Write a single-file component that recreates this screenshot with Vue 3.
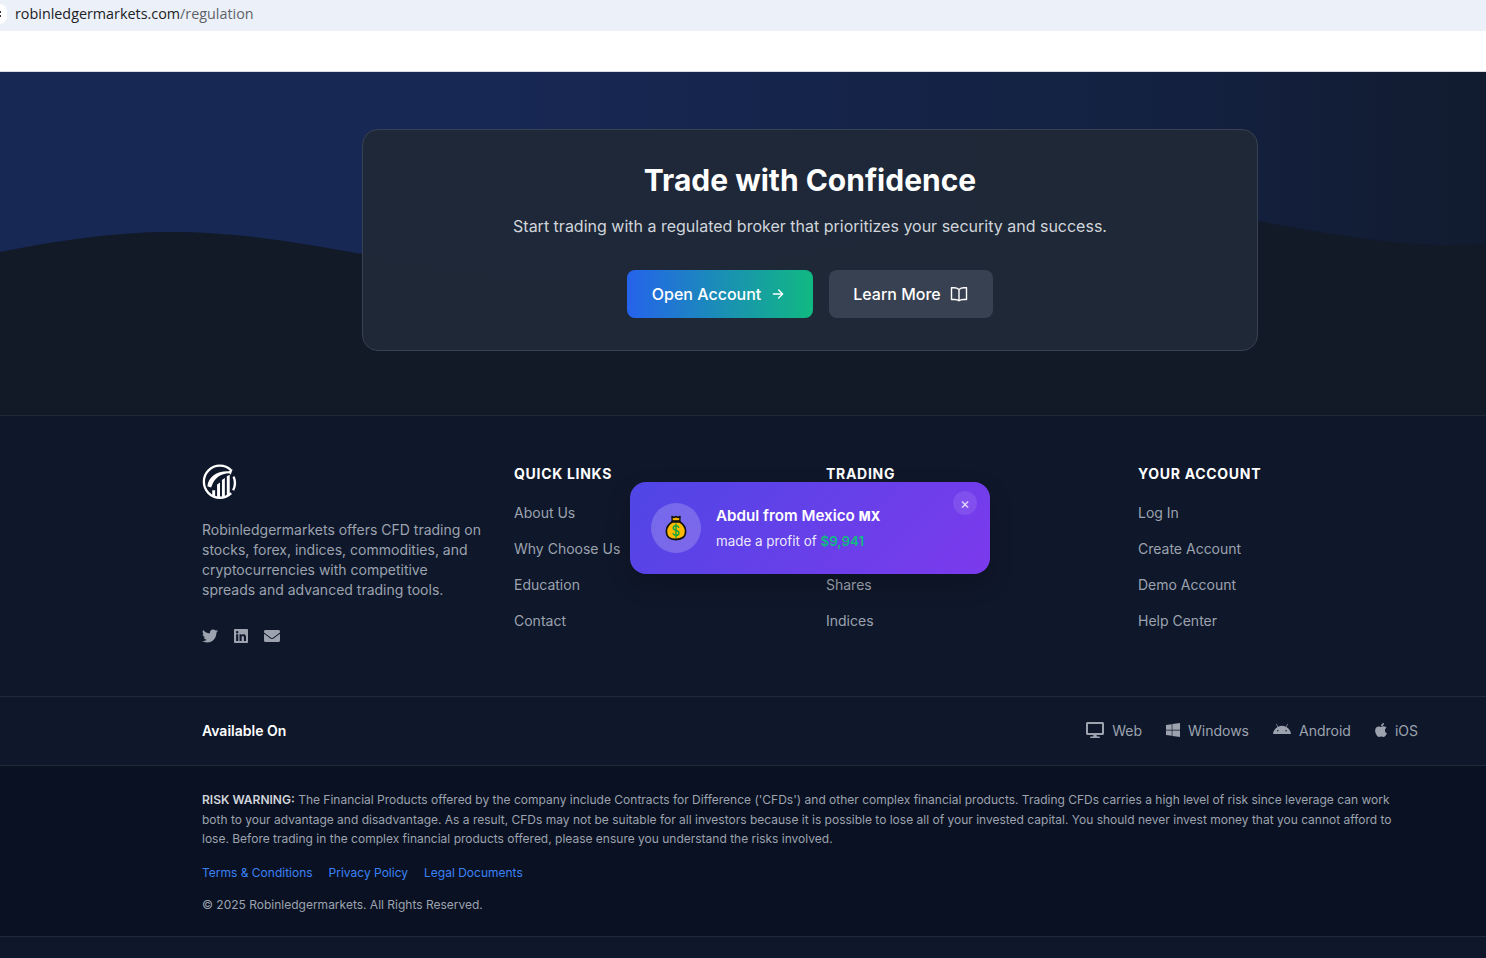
<script setup>
const quick = ['About Us', 'Why Choose Us', 'Education', 'Contact']
const trading = ['Forex', 'Commodities', 'Shares', 'Indices']
const account = ['Log In', 'Create Account', 'Demo Account', 'Help Center']
const columns = [
  { title: 'Quick Links', links: quick },
  { title: 'Trading', links: trading },
  { title: 'Your Account', links: account },
]
const platforms = [
  { name: 'Web', box: '0 0 576 512', w: 18, d: 'M528 0H48C21.5 0 0 21.5 0 48v320c0 26.5 21.5 48 48 48h192l-16 48h-72c-13.3 0-24 10.7-24 24s10.7 24 24 24h272c13.3 0 24-10.7 24-24s-10.7-24-24-24h-72l-16-48h192c26.5 0 48-21.5 48-48V48c0-26.5-21.5-48-48-48zm-16 352H64V64h448v288z' },
  { name: 'Windows', box: '0 0 448 512', w: 14, d: 'M0 93.7l183.6-25.3v177.4H0V93.7zm0 324.6l183.6 25.3V268.4H0v149.9zm203.8 28L448 480V268.4H203.8v177.9zm0-380.6v180.1H448V32L203.8 65.7z' },
  { name: 'Android', box: '0 0 576 512', w: 18, d: 'M420.55,301.93a24,24,0,1,1,24-24,24,24,0,0,1-24,24m-265.1,0a24,24,0,1,1,24-24,24,24,0,0,1-24,24m273.7-144.48,47.94-83a10,10,0,1,0-17.27-10h0l-48.54,84.07a301.25,301.25,0,0,0-246.56,0L116.18,64.45a10,10,0,1,0-17.27,10h0l47.94,83C64.53,202.22,8.24,285.55,0,384H576c-8.24-98.45-64.54-181.78-146.85-226.55' },
  { name: 'iOS', box: '0 0 384 512', w: 12, d: 'M318.7 268.7c-.2-36.7 16.4-64.4 50-84.8-18.8-26.9-47.2-41.7-84.7-44.6-35.5-2.8-74.3 20.7-88.5 20.7-15 0-49.4-19.7-76.4-19.7C63.3 141.2 4 184.8 4 273.5q0 39.3 14.4 81.2c12.8 36.7 59 126.7 107.2 125.2 25.2-.6 43-17.9 75.8-17.9 31.8 0 48.3 17.9 76.4 17.9 48.6-.7 90.4-82.5 102.6-119.3-65.2-30.7-61.7-90-61.7-91.9zm-56.6-164.2c27.3-32.4 24.8-61.9 24-72.5-24.1 1.4-52 16.4-67.9 34.9-17.5 19.8-27.8 44.3-25.6 71.9 26.1 2 49.9-11.4 69.5-34.3z' },
]
</script>

<template>
  <div class="page">
    <div class="urlbar">
      <span class="site-chip"></span>
      <span class="url"><span class="domain">robinledgermarkets.com</span>/regulation</span>
    </div>
    <div class="nav"></div>

    <section class="hero">
      <svg class="wave" viewBox="0 0 1486 343" preserveAspectRatio="none" aria-hidden="true">
        <path d="M0 180 C60 168 115 160 170 160 C240 160 300 171 362 182 C480 204 610 222 760 190 C900 160 1090 120 1258 149 C1330 162 1390 173 1450 173 C1462 173 1475 172 1486 172 L1486 343 L0 343 Z" />
      </svg>
      <div class="cta">
        <h1>Trade with Confidence</h1>
        <p>Start trading with a regulated broker that prioritizes your security and success.</p>
        <div class="cta-buttons">
          <a class="btn btn-primary">
            Open Account
            <svg width="16" height="16" viewBox="0 0 24 24" fill="none" stroke="currentColor" stroke-width="2" stroke-linecap="round" stroke-linejoin="round"><path d="M5 12h14M13 6l6 6-6 6" /></svg>
          </a>
          <a class="btn btn-secondary">
            Learn More
            <svg width="20" height="20" viewBox="0 0 24 24" fill="none" stroke="currentColor" stroke-width="1.7" stroke-linecap="round" stroke-linejoin="round"><path d="M12 6.5C10.5 5.2 8.5 4.5 6 4.5H3v14h4c2 0 3.7.5 5 1.6 1.3-1.100 3-1.600 5-1.600h4v-14h-3c-2.500 0-4.500.7-6 2zM12 6.500v13.600" /></svg>
          </a>
        </div>
      </div>
    </section>

    <footer class="footer">
      <div class="inner grid">
        <div class="about">
          <svg class="logo" width="36" height="35" viewBox="0 0 36 36" fill="none" aria-label="Robinledgermarkets">
            <path d="M29.500 6.500A16.500 16.500 0 1 0 29.500 30" stroke="#fff" stroke-width="2.400" />
            <path d="M32 13A16.500 16.500 0 0 1 31.500 27" stroke="#fff" stroke-width="2.400" />
            <path d="M5 23C6 13 15 7 27 7.500L31 5.500l-2 5.500-1.500-1.500C19 10 12 14 9 24c-1.500 0-3-.5-4-1z" fill="#fff" />
            <path d="M10 33v-6h3v7zM15 34V21l3-2v15zM20 34V16.500l3-2V34zM25 33V12.500l3-1.500v20z" fill="#fff" />
          </svg>
          <p>Robinledgermarkets offers CFD trading on stocks, forex, indices, commodities, and cryptocurrencies with competitive spreads and advanced trading tools.</p>
          <div class="social">
            <svg width="16" height="16" viewBox="0 0 512 512"><path fill="currentColor" d="M459.37 151.716c.325 4.548.325 9.097.325 13.645 0 138.72-105.583 298.558-298.558 298.558-59.452 0-114.68-17.219-161.137-47.106 8.447.974 16.568 1.299 25.34 1.299 49.055 0 94.213-16.568 130.274-44.832-46.132-.975-84.792-31.188-98.112-72.772 6.498.974 12.995 1.624 19.818 1.624 9.421 0 18.843-1.3 27.614-3.573-48.081-9.747-84.143-51.98-84.143-102.985v-1.299c13.969 7.797 30.214 12.67 47.431 13.319-28.264-18.843-46.781-51.005-46.781-87.391 0-19.492 5.197-37.36 14.294-52.954 51.655 63.675 129.3 105.258 216.365 109.807-1.624-7.797-2.599-15.918-2.599-24.04 0-57.828 46.782-104.934 104.934-104.934 30.213 0 57.502 12.67 76.67 33.137 23.715-4.548 46.456-13.32 66.599-25.34-7.798 24.366-24.366 44.833-46.132 57.827 21.117-2.273 41.584-8.122 60.426-16.243-14.292 20.791-32.161 39.308-52.628 54.253z" /></svg>
            <svg width="14" height="16" viewBox="0 0 448 512"><path fill="currentColor" d="M416 32H31.900C14.300 32 0 46.500 0 64.300v383.400C0 465.500 14.300 480 31.900 480H416c17.600 0 32-14.500 32-32.300V64.300c0-17.800-14.400-32.300-32-32.300zM135.400 416H69V202.200h66.500V416zm-33.200-243c-21.300 0-38.500-17.300-38.500-38.500S80.900 96 102.200 96c21.200 0 38.500 17.300 38.500 38.500 0 21.300-17.200 38.500-38.500 38.500zm282.100 243h-66.400V312c0-24.800-.5-56.700-34.500-56.700-34.600 0-39.900 27-39.900 54.900V416h-66.400V202.200h63.700v29.200h.9c8.900-16.800 30.600-34.500 62.900-34.500 67.200 0 79.700 44.300 79.700 101.900V416z" /></svg>
            <svg width="16" height="16" viewBox="0 0 512 512"><path fill="currentColor" d="M502.300 190.800c3.900-3.100 9.700-.2 9.700 4.700V400c0 26.500-21.500 48-48 48H48c-26.500 0-48-21.500-48-48V195.600c0-5 5.700-7.800 9.700-4.700 22.400 17.400 52.100 39.500 154.100 113.600 21.100 15.400 56.700 47.800 92.200 47.600 35.700.3 72-32.800 92.300-47.600 102-74.100 131.600-96.300 154-113.700zM256 320c23.200.4 56.600-29.200 73.400-41.400 132.700-96.300 142.800-104.700 173.400-128.700 5.800-4.500 9.200-11.500 9.200-18.900v-19c0-26.500-21.500-48-48-48H48C21.500 64 0 85.500 0 112v19c0 7.400 3.400 14.300 9.200 18.900 30.600 23.900 40.700 32.400 173.400 128.700 16.800 12.200 50.200 41.800 73.400 41.400z" /></svg>
          </div>
        </div>
        <div v-for="col in columns" :key="col.title" class="col">
          <h3>{{ col.title }}</h3>
          <ul>
            <li v-for="l in col.links" :key="l">{{ l }}</li>
          </ul>
        </div>
      </div>

      <div class="platform-bar">
        <div class="inner platform-row">
          <strong>Available On</strong>
          <div class="platforms">
            <span v-for="p in platforms" :key="p.name" class="platform">
              <svg :width="p.w" height="16" :viewBox="p.box"><path fill="currentColor" :d="p.d" /></svg>
              {{ p.name }}
            </span>
          </div>
        </div>
      </div>

      <div class="legal">
        <div class="inner">
          <p class="risk"><b>RISK WARNING:</b> The Financial Products offered by the company include Contracts for Difference ('CFDs') and other complex financial products. Trading CFDs carries a high level of risk since leverage can work both to your advantage and disadvantage. As a result, CFDs may not be suitable for all investors because it is possible to lose all of your invested capital. You should never invest money that you cannot afford to lose. Before trading in the complex financial products offered, please ensure you understand the risks involved.</p>
          <div class="legal-links">
            <a>Terms &amp; Conditions</a>
            <a>Privacy Policy</a>
            <a>Legal Documents</a>
          </div>
          <p class="copy">© 2025 Robinledgermarkets. All Rights Reserved.</p>
        </div>
      </div>
    </footer>

    <div class="toast">
      <div class="toast-icon">
        <svg width="22" height="26" viewBox="0 0 24 26" preserveAspectRatio="none">
          <path d="M7.500 1.500 10 2.500 12 1.500 14 2.500 16.500 1.500 16 6.500H8z" fill="#f7b500" stroke="#111" stroke-width="1.500" stroke-linejoin="round" />
          <path d="M8.500 6.500C4 9 1.500 12.500 1.500 16.500 1.500 22 6 24.500 12 24.500S22.500 22 22.500 16.500C22.500 12.500 20 9 15.500 6.500z" fill="#ffb900" stroke="#111" stroke-width="1.800" />
          <path d="M7.800 6.500h8.400" stroke="#111" stroke-width="1.800" stroke-linecap="round" />
          <path d="M15 12.300c-.6-1-1.700-1.500-3-1.500-1.800 0-3 .9-3 2.300 0 3.200 6.200 1.700 6.200 4.800 0 1.500-1.400 2.400-3.200 2.400-1.400 0-2.600-.6-3.200-1.600M12 9v13.500" fill="none" stroke="#10a53c" stroke-width="1.500" stroke-linecap="round" />
        </svg>
      </div>
      <div class="toast-text">
        <div class="toast-name">Abdul from Mexico <span class="flag">MX</span></div>
        <div class="toast-sub">made a profit of <b>$9,941</b></div>
      </div>
      <span class="toast-close">×</span>
    </div>
  </div>
</template>

<style scoped>
.page {
  position: relative;
  height: 958px;
  overflow: hidden;
  background: #0f172a;
  font-family: Inter, "Liberation Sans", sans-serif;
}
.urlbar {
  height: 31px;
  background: #ebf0f9;
  display: flex;
  align-items: center;
  gap: 8px;
}
.site-chip {
  width: 7px;
  height: 20px;
  margin-bottom: 3px;
  background:
    linear-gradient(#333, #333) 0 7px / 1px 2px no-repeat,
    linear-gradient(#333, #333) 0 11px / 1px 2px no-repeat,
    #fff;
  border-radius: 0 10px 10px 0;
}
.url {
  margin-bottom: 4px;
  font-family: "Open Sans", "Noto Sans", sans-serif;
  font-size: 14.350px;
  color: #5f6368;
}
.domain {
  color: #202124;
}
.nav {
  height: 40px;
  background: #fff;
  border-bottom: 1px solid #d8dce3;
}
.hero {
  position: relative;
  height: 343px;
  padding-top: 57px;
  box-sizing: border-box;
  background: linear-gradient(90deg, #172855 0%, #172855 30%, #13203f 80%, #121c30 100%);
}
.wave {
  position: absolute;
  inset: 0;
  width: 100%;
  height: 100%;
  fill: #121a28;
}
.cta {
  position: relative;
  box-sizing: border-box;
  width: 896px;
  height: 222px;
  margin-left: 362px;
  padding-top: 32px;
  text-align: center;
  background: rgba(31, 41, 55, 0.96);
  border: 1px solid #374151;
  border-radius: 16px;
}
.cta h1 {
  margin: 0;
  font-size: 30px;
  line-height: 36px;
  font-weight: 700;
  color: #fff;
}
.cta p {
  margin: 16px 0 0;
  font-size: 16px;
  line-height: 24px;
  color: #d1d5db;
}
.cta-buttons {
  display: flex;
  justify-content: center;
  gap: 16px;
  margin-top: 32px;
}
.btn {
  display: flex;
  align-items: center;
  box-sizing: border-box;
  height: 48px;
  border-radius: 8px;
  color: #fff;
  font-size: 16px;
  font-weight: 500;
}
.btn-primary {
  width: 186px;
  gap: 9px;
  padding-right: 2px;
  justify-content: center;
  background: linear-gradient(90deg, #2563eb, #10b981);
}
.btn-secondary {
  width: 164px;
  gap: 8px;
  justify-content: center;
  background: #374151;
}
.footer {
  border-top: 1px solid #1f2937;
  background: #0f172a;
}
.inner {
  box-sizing: border-box;
  width: 1216px;
  margin-left: 202px;
}
.grid {
  display: grid;
  grid-template-columns: repeat(4, 280px);
  gap: 32px;
  height: 280px;
  padding-top: 48px;
}
.logo {
  display: block;
}
.about p {
  margin: 21px 0 0;
  font-size: 14px;
  line-height: 20px;
  color: #9ca3af;
}
.social {
  display: flex;
  gap: 16px;
  margin-top: 28px;
  color: #9ca3af;
}
.col h3 {
  margin: 0;
  font-size: 14px;
  line-height: 20px;
  font-weight: 700;
  text-transform: uppercase;
  letter-spacing: 0.7px;
  color: #fff;
}
.col ul {
  list-style: none;
  margin: 19px 0 0;
  padding: 0;
  display: flex;
  flex-direction: column;
  gap: 16px;
}
.col li {
  font-size: 14px;
  line-height: 20px;
  color: #9ca3af;
}
.platform-bar {
  border-top: 1px solid #1f2937;
  height: 68px;
}
.platform-row {
  height: 100%;
  padding-bottom: 2px;
  display: flex;
  align-items: center;
  justify-content: space-between;
}
.platform-row strong {
  font-size: 14px;
  font-weight: 600;
  color: #fff;
}
.platforms {
  display: flex;
  gap: 24px;
}
.platform {
  display: flex;
  align-items: center;
  gap: 8px;
  font-size: 14px;
  color: #9ca3af;
}
.legal {
  border-top: 1px solid #1f2937;
  border-bottom: 1px solid #1f2937;
  background: #0a1122;
  height: 172px;
  box-sizing: border-box;
  padding-top: 24px;
}
.risk {
  margin: 0;
  font-size: 12px;
  line-height: 19.500px;
  color: #9ca3af;
}
.risk b {
  font-weight: 600;
  color: #d1d5db;
}
.legal-links {
  display: flex;
  gap: 16px;
  margin-top: 15px;
  font-size: 12px;
  line-height: 18px;
  color: #3b82f6;
}
.copy {
  margin: 14px 0 0;
  font-size: 12px;
  line-height: 18px;
  color: #9ca3af;
}
.toast {
  position: absolute;
  left: 630px;
  top: 482px;
  box-sizing: border-box;
  width: 360px;
  height: 92px;
  padding: 0 21px;
  display: flex;
  align-items: center;
  gap: 15px;
  border-radius: 16px;
  background: linear-gradient(135deg, #4f46e5, #7c3aed);
  box-shadow: 0 10px 25px rgba(0, 0, 0, 0.2);
}
.toast-icon {
  flex: none;
  width: 50px;
  height: 50px;
  border-radius: 50%;
  background: rgba(255, 255, 255, 0.2);
  display: flex;
  align-items: center;
  justify-content: center;
}
.toast-name {
  font-size: 15.200px;
  line-height: 24px;
  font-weight: 600;
  color: #fff;
}
.flag {
  font-size: 12.500px;
  font-weight: 800;
  letter-spacing: 0.2px;
}
.toast-sub {
  font-size: 13.400px;
  line-height: 24px;
  color: rgba(255, 255, 255, 0.9);
}
.toast-sub b {
  font-weight: 600;
  color: #10b981;
}
.toast-close {
  position: absolute;
  right: 13px;
  top: 9px;
  width: 24px;
  height: 24px;
  border-radius: 50%;
  background: rgba(255, 255, 255, 0.1);
  color: rgba(255, 255, 255, 0.8);
  display: flex;
  align-items: center;
  justify-content: center;
  font-size: 15px;
}
</style>
